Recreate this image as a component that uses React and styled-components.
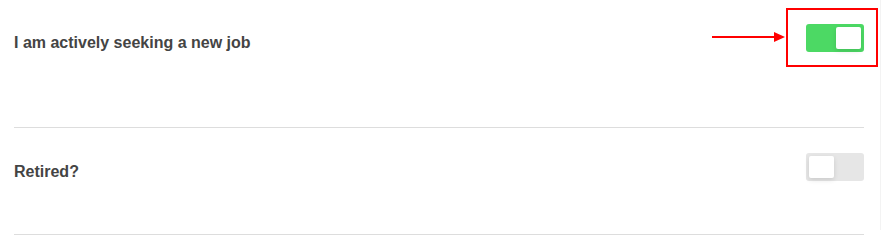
import React, { useState } from 'react';
import styled, { createGlobalStyle } from 'styled-components';

const GlobalStyle = createGlobalStyle`
  html, body {
    margin: 0;
    padding: 0;
    background: #fff;
  }
  body {
    font-family: "Liberation Sans", Arial, sans-serif;
  }
`;

const Page = styled.div`
  position: relative;
  width: 881px;
  box-sizing: border-box;
  padding: 0 17px 0 14px;
`;

const EdgeLine = styled.div`
  position: absolute;
  top: 0;
  right: 0;
  width: 1px;
  height: 230px;
  background: #f3f3f3;
`;

const Row = styled.div`
  display: flex;
  justify-content: space-between;
  align-items: flex-start;
  padding-top: ${p => p.$top}px;
  padding-bottom: ${p => p.$bottom}px;
  border-bottom: 1px solid #dddddd;
`;

const Label = styled.div`
  padding-top: 10px;
  font-size: 16px;
  line-height: 18px;
  font-weight: 700;
  color: #444444;
`;

const Track = styled.button`
  display: flex;
  justify-content: ${p => (p.$on ? 'flex-end' : 'flex-start')};
  width: 58px;
  height: 28px;
  padding: 3px;
  box-sizing: border-box;
  border: none;
  border-radius: 3px;
  background: ${p => (p.$on ? '#4cd964' : '#e6e6e6')};
  cursor: pointer;
`;

const Knob = styled.span`
  width: 25px;
  height: 22px;
  border-radius: 2px;
  background: #ffffff;
  box-shadow: 0 2px 5px rgba(0, 0, 0, 0.12);
`;

// red annotation drawn on top of the screenshot
const Highlight = styled.div`
  position: absolute;
  left: 786px;
  top: 8px;
  width: 92px;
  height: 59px;
  box-sizing: border-box;
  border: 2px solid #ff0000;
  pointer-events: none;
`;

const Arrow = styled.svg`
  position: absolute;
  left: 712px;
  top: 31px;
  pointer-events: none;
`;

function Toggle({ on, onChange }) {
  return (
    <Track $on={on} onClick={() => onChange(!on)} aria-pressed={on}>
      <Knob />
    </Track>
  );
}

export default function App() {
  const [seeking, setSeeking] = useState(true);
  const [retired, setRetired] = useState(false);

  return (
    <>
      <GlobalStyle />
      <Page>
        <Row $top={24} $bottom={75}>
          <Label>I am actively seeking a new job</Label>
          <Toggle on={seeking} onChange={setSeeking} />
        </Row>
        <Row $top={25} $bottom={53}>
          <Label>Retired?</Label>
          <Toggle on={retired} onChange={setRetired} />
        </Row>
        <EdgeLine />
        <Highlight />
        <Arrow width="73" height="12" viewBox="0 0 73 12">
          <line x1="0" y1="6" x2="64" y2="6" stroke="#ff0000" strokeWidth="2" />
          <polygon points="62,1 73,6 62,11" fill="#ff0000" />
        </Arrow>
      </Page>
    </>
  );
}
